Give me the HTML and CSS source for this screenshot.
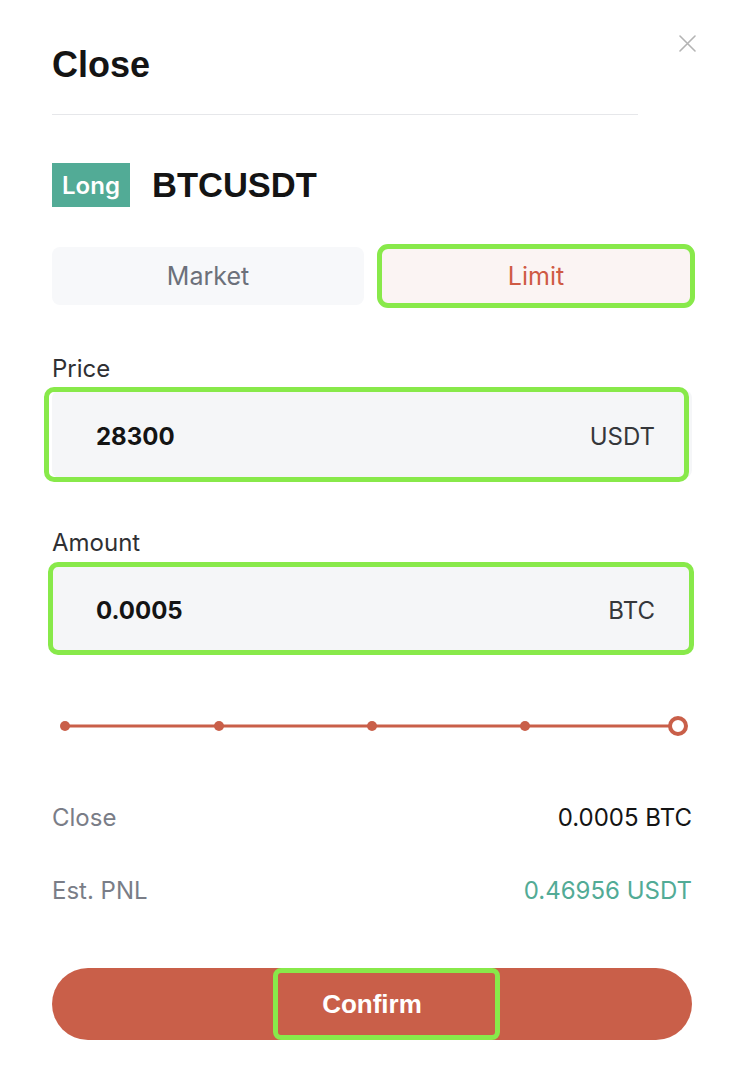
FILE: index.html
```html
<!DOCTYPE html>
<html lang="en">
<head>
<meta charset="utf-8">
<title>Close</title>
<link rel="stylesheet" href="styles.css">
</head>
<body>
<div class="modal">
  <div class="top">
    <div class="header"><h1 class="title">Close</h1></div>
    <button class="close-btn" aria-label="Close">
      <svg width="17" height="17" viewBox="0 0 17 17"><path d="M1 1 L16 16 M16 1 L1 16" stroke="#b4b4b4" stroke-width="1.6" fill="none" stroke-linecap="round"/></svg>
    </button>
  </div>

  <div class="pair">
    <span class="badge">Long</span>
    <span class="symbol">BTCUSDT</span>
  </div>

  <div class="tabs">
    <button class="tab">Market</button>
    <button class="tab tab-active">Limit</button>
  </div>

  <div class="label label-price">Price</div>
  <div class="field field-price">
    <span class="value">28300</span>
    <span class="unit">USDT</span>
  </div>

  <div class="label label-amount">Amount</div>
  <div class="field field-amount">
    <span class="value">0.0005</span>
    <span class="unit">BTC</span>
  </div>

  <div class="slider">
    <svg width="640" height="24" viewBox="0 0 640 24">
      <line x1="13" y1="12" x2="626" y2="12" stroke="#c95f49" stroke-width="3"/>
      <circle cx="13" cy="12" r="5" fill="#c95f49"/>
      <circle cx="167" cy="12" r="5" fill="#c95f49"/>
      <circle cx="320" cy="12" r="5" fill="#c95f49"/>
      <circle cx="473" cy="12" r="5" fill="#c95f49"/>
      <circle cx="626" cy="12" r="8" fill="#ffffff" stroke="#c95f49" stroke-width="4"/>
    </svg>
  </div>

  <div class="row row-first">
    <span class="row-label">Close</span>
    <span class="row-value">0.0005 BTC</span>
  </div>
  <div class="row row-second">
    <span class="row-label">Est. PNL</span>
    <span class="row-value pnl">0.46956 USDT</span>
  </div>

  <button class="confirm"><span class="confirm-text">Confirm</span></button>
</div>
</body>
</html>
```

FILE: styles.css
```css
*, *::before, *::after { box-sizing: border-box; }

html, body {
  margin: 0;
  padding: 0;
  background: #ffffff;
}

body {
  width: 738px;
  font-family: Inter, "Noto Sans", sans-serif;
  color: #111111;
}

.modal {
  padding: 35px 46px 0 52px;
  width: 738px;
}

.top {
  display: flex;
  align-items: flex-start;
}

.header {
  flex: 1;
  margin-top: 10px;
  padding-bottom: 29px;
  border-bottom: 1px solid #e6e7ea;
}

.title {
  margin: 0;
  font-family: "Liberation Sans", Arial, sans-serif;
  font-weight: 700;
  font-size: 36px;
  line-height: 40px;
  color: #141414;
}

.close-btn {
  margin-left: 41px;
  margin-right: -4px;
  padding: 0;
  border: 0;
  background: transparent;
  width: 17px;
  height: 17px;
  display: flex;
}

.pair {
  margin-top: 48px;
  display: flex;
  align-items: center;
  height: 44px;
}

.badge {
  height: 44px;
  width: 78px;
  display: flex;
  align-items: center;
  justify-content: center;
  background: #52ab96;
  color: #ffffff;
  font-family: Inter, sans-serif;
  font-weight: 600;
  font-size: 24px;
}

.symbol {
  margin-left: 22px;
  font-family: "Liberation Sans", Arial, sans-serif;
  font-weight: 700;
  font-size: 34.5px;
  color: #141414;
}

.tabs {
  margin-top: 40px;
  display: grid;
  grid-template-columns: 1fr 1fr;
  gap: 16px;
}

.tab {
  height: 58px;
  border: 0;
  border-radius: 8px;
  background: #f7f8fa;
  font-family: Inter, sans-serif;
  font-size: 25px;
  color: #6c707a;
}

.tab-active {
  background: #fbf4f3;
  color: #cf5a44;
  outline: 5px solid #88e94a;
  outline-offset: -2px;
}

.label {
  font-size: 24px;
  line-height: 28px;
  color: #2f3033;
  margin-bottom: 7px;
}

.label-price { margin-top: 50px; }
.label-amount { margin-top: 51px; }

.field {
  position: relative;
  height: 88px;
  background: #f5f6f8;
  border-radius: 8px;
  display: flex;
  align-items: center;
  justify-content: space-between;
  padding: 5px 37px 0 44px;
  font-size: 24px;
}

.field::after {
  content: "";
  position: absolute;
  border: 5px solid #88e94a;
  border-radius: 10px;
  pointer-events: none;
}

.field-price::after { left: -8px; right: 3px; top: -3px; bottom: -4px; }
.field-amount::after { left: -4px; right: -2px; top: -2px; bottom: -3px; }

.value {
  font-weight: 700;
  color: #141414;
}

.unit {
  color: #35373b;
}

.slider {
  margin-top: 62px;
  height: 24px;
  display: flex;
}

.row {
  display: flex;
  justify-content: space-between;
  font-size: 24px;
  line-height: 28px;
}

.row-first { margin-top: 66px; }
.row-second { margin-top: 45px; }

.row-label { color: #7a7d87; }
.row-value { color: #141414; }
.pnl { color: #52ab96; }

.confirm {
  position: relative;
  margin-top: 63px;
  width: 640px;
  height: 72px;
  border: 0;
  border-radius: 36px;
  background: #c95f49;
  display: flex;
  align-items: center;
  justify-content: center;
  padding: 0;
}

.confirm::after {
  content: "";
  position: absolute;
  left: 221px;
  width: 227px;
  top: 0;
  bottom: 0;
  border: 5px solid #88e94a;
  border-radius: 8px;
}

.confirm-text {
  font-family: "Liberation Sans", Arial, sans-serif;
  font-weight: 700;
  font-size: 26px;
  color: #ffffff;
}
```
